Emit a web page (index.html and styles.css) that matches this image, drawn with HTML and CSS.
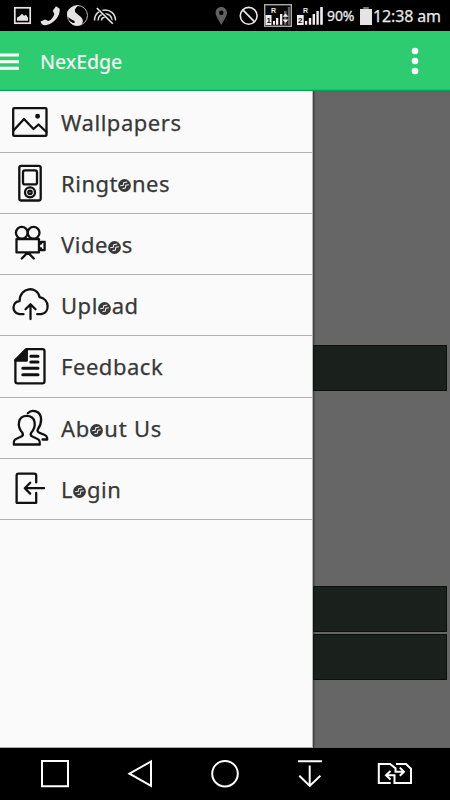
FILE: index.html
```html
<!DOCTYPE html>
<html lang="en">
<head>
<meta charset="utf-8">
<title>NexEdge</title>
<link rel="stylesheet" href="styles.css">
</head>
<body>
<svg class="defs" width="0" height="0"><defs><symbol id="disc" viewBox="0 0 12 12"><circle cx="6" cy="6" r="5.9" fill="#383838"/><path d="M2 6.2L4.8 5.8 5.3 3.5 8.5 2.8M4.2 8.9L6.8 8.3 7.2 5.8 10 5.3" fill="none" stroke="#eee" stroke-width="1"/></symbol></defs></svg>
<div class="phone">
  <div class="status">
    <svg class="status-left" width="130" height="31" viewBox="0 0 130 31">
      <rect x="14.8" y="7.8" width="15.4" height="15.4" fill="none" stroke="#e4e4e4" stroke-width="1.7"/>
      <path d="M17 20.7v-3l3-2 2-2 2 2 2-1 2 3v3z" fill="#e4e4e4"/>
      <path d="M56 6.2l3.7 2.6c.8 7-5.8 15.4-14.4 16.4-2.2.2-4-.8-4.8-3.6l4.6-2 3.2 1.5c3.2-1.5 5.2-4 6-7.2l-1.6-3.2z" fill="#e4e4e4"/>
      <circle cx="77.5" cy="15.5" r="10" fill="none" stroke="#bbb" stroke-width="1"/>
      <path d="M79 5.3c-7 .2-12 4.2-12 8.8 0 4 4.8 5 7.3 7 1.4 1.1.3 2.4-1.8 1.6l-3.7-2.3c2 4 5.7 5.7 9.1 5.3 5-.6 6.2-4.6 3.7-8-2.2-2.9-7-4.1-6.7-7.4.2-2 2-3.8 4.1-5z" fill="#e4e4e4"/>
      <g fill="none" stroke="#ddd" stroke-width="1.5"><path d="M94.5 20.5c0-14 21-14 21 0M98 20.5c0-9 14-9 14 0M101.5 20.5c0-4.5 7-4.5 7 0"/></g>
      <path d="M97 7.5l16 16" stroke="#000" stroke-width="3.2"/><path d="M96.8 8l16 15.8" stroke="#eee" stroke-width="1.6"/>
    </svg>
    <svg class="status-signals" width="114" height="31" viewBox="210 0 114 31">
      <path fill-rule="evenodd" d="M221.3 7c-3.4 0-5.7 2.5-5.7 5.6 0 3.8 3.5 8 5.7 12.4 2.2-4.4 5.7-8.6 5.7-12.4 0-3.1-2.3-5.6-5.7-5.6zm0 3.5a2.2 2.2 0 110 4.4 2.2 2.2 0 010-4.4z" fill="#606060"/>
      <circle cx="248.7" cy="15.8" r="8.4" fill="none" stroke="#e8e8e8" stroke-width="1.6"/><path d="M242.8 9.8l11.8 12" stroke="#e8e8e8" stroke-width="1.7"/>
      <rect x="264.7" y="4.7" width="26.6" height="21.6" fill="#080808" stroke="#aaa" stroke-width="1.4"/>
      <g fill="#eee"><path d="M265.5 15h6v10h-6zM273 21h2v3.7h-2zM276 18h2.3v6.7H276zM280 14h2.3v10.7H280z"/><path d="M284 11h2.6v13.7H284zM287.8 7h2.5v17.7h-2.5z" fill="#606060"/><path d="M285.5 13.5l3 3.2h-6zM282.5 19.5h6l-3 3.2z"/><path d="M297 15h6.7v10H297zM305 21h2.2v3.7H305zM308.8 18h2.4v6.7h-2.4zM312.6 14h2.4v10.7h-2.4zM316.4 11h2.4v13.7h-2.4zM320.2 7h2.6v17.7h-2.6z"/></g>
      <g font-family="Liberation Sans, sans-serif" font-weight="700" font-size="8"><text x="271" y="12.8" fill="#eee" font-size="7">R</text><text x="303" y="12.8" fill="#eee" font-size="7">R</text><text x="266.5" y="23" fill="#111">1</text><text x="298" y="23" fill="#111">2</text></g>
    </svg>
    <span class="percent">90%</span>
    <svg class="battery" width="12" height="18" viewBox="0 0 12 18"><path d="M3.2 0h5.6v2H3.2z" fill="#777"/><path d="M0 2h12v16H0z" fill="#e4e4e4"/></svg>
    <span class="clock">12:38 am</span>
  </div>

  <header class="toolbar">
    <svg class="menu" width="19" height="18" viewBox="0 0 19 18"><path d="M0 2h19M0 8.7h19M0 15.3h19" stroke="#fff" stroke-width="2.9"/></svg>
    <h1>NexEdge</h1>
    <svg class="more" width="8" height="28" viewBox="0 0 8 28"><g fill="#fff"><circle cx="4" cy="4" r="3.3"/><circle cx="4" cy="14" r="3.3"/><circle cx="4" cy="24" r="3.3"/></g></svg>
  </header>

  <main>
    <nav class="drawer">
      <a class="item"><svg class="icon" width="40" height="40" viewBox="0 0 40 40"><rect x="3.2" y="6.2" width="33.3" height="27.7" rx="1"/><path d="M3.5 28.5L14 17l9.5 10 5-4.5 8 7.5"/><circle cx="27.6" cy="14.2" r="1.3" class="solid"/></svg><span class="label wallpapers">Wallpapers</span></a>
      <a class="item"><svg class="icon" width="40" height="40" viewBox="0 0 40 40"><rect x="9.3" y="2.8" width="21.4" height="34.7" rx="2"/><rect x="13" y="7.4" width="14" height="14" rx="2"/><circle cx="20" cy="29.3" r="5"/><circle cx="20" cy="29.3" r="1.7"/></svg><span class="label ringtones">Ringt<span class="o">o<svg><use href="#disc"/></svg></span>nes</span></a>
      <a class="item"><svg class="icon" width="40" height="40" viewBox="0 0 40 40"><circle cx="11.8" cy="8.8" r="5.9"/><circle cx="23.6" cy="8.8" r="5.9"/><path d="M6.5 15.1h22.5v13.3H6.5zM29.3 19.5h1.8v-1.7h3.5v8.4h-3.5v-1.7h-1.8M17.8 28.4L11.8 34.5M17.8 28.4l6 6.1"/></svg><span class="label videos">Vide<span class="o">o<svg><use href="#disc"/></svg></span>s</span></a>
      <a class="item"><svg class="icon" width="40" height="40" viewBox="0 0 40 40"><path d="M13.5 29.2h-4C.8 27.7 2.2 16.6 9.6 16c0-14.4 18-15.4 20-3.8C40 14.2 40 27.8 31.2 29.2h-4M20.5 34V19.3M15.5 24.3l5-5 5 5"/></svg><span class="label upload">Upl<span class="o">o<svg><use href="#disc"/></svg></span>ad</span></a>
      <a class="item"><svg class="icon" width="40" height="40" viewBox="0 0 40 40"><path d="M16 3.2h16.4q2.1 0 2.1 2.1v30q0 2.1-2.1 2.1H7.5q-2.1 0-2.1-2.1V14z"/><path d="M16.8 3.3v11.2H5.4z" class="solid"/><path d="M20.8 10.2H28M20.8 16H28M12.8 22.2H28M12.8 28.7H28" stroke-width="3"/></svg><span class="label feedback">Feedback</span></a>
      <a class="item"><svg class="icon" width="40" height="40" viewBox="0 0 40 40"><path d="M3.8 36.5C2.6 30 9 30.5 11.8 28.2q1.8-1.3.6-3.4C6.5 18 8 7.8 16.8 7.8S27 18 21.2 24.8q-1.2 2.1.6 3.4C24.6 30.5 31 30 29.8 36.5z"/><path d="M17.8 5.2c4-4.2 13.2-2.5 13.3 6.1.1 5.5-1.4 7.5-3.2 9.9q-1 1.8.8 3.2C31.5 26.5 38 25.8 37.2 31.5h-4.7"/></svg><span class="label about">Ab<span class="o">o<svg><use href="#disc"/></svg></span>ut Us</span></a>
      <a class="item"><svg class="icon" width="40" height="40" viewBox="0 0 40 40"><path d="M26.2 13.4V6.6q0-2-2-2H8.6q-2 0-2 2v27.2h19.6v-9.9M15 19.2h19M20.2 13.8L14.8 19.2l5.4 5.4"/></svg><span class="label login">L<span class="o">o<svg><use href="#disc"/></svg></span>gin</span></a>
    </nav>
    <div class="backdrop">
      <div class="card"></div>
      <div class="card second"></div>
      <div class="card third"></div>
    </div>
  </main>

  <footer class="navbar">
    <svg width="450" height="52" viewBox="0 748 450 52" fill="none" stroke="#fff" stroke-width="2">
      <path d="M42 761h26v25.3H42zM129.5 773.7l21.5-12.2v24.4z"/>
      <circle cx="225" cy="773.7" r="12.8"/>
      <path d="M298 761.3h24M309.7 765.5v20M299.3 775.7l10.4 10.2 10.7-10.2"/>
      <path d="M390.7 783h-11.9v-19h11.2l5.5 4.3v3.4h8M396 764h10l5 4.8V783h-16.5v-7.8h-8M399.8 767.6l4.2 4.1-4.2 4.1M390.5 771l-4.5 4.2 4.5 4.2"/>
    </svg>
  </footer>
</div>
</body>
</html>
```

FILE: styles.css
```css
* { box-sizing: border-box; }
body { margin: 0; background: #000; font-family: "Noto Sans", sans-serif; }
.defs { display: block; }
.phone { width: 450px; height: 800px; display: flex; flex-direction: column; overflow: hidden; }
svg { display: block; flex: none; }
.status { height: 31px; flex: none; display: flex; align-items: center; background: #000; color: #e8e8e8; }
.status-signals { margin-left: 80px; }
.percent { width: 28px; margin-left: 3px; font-size: 14px; -webkit-text-stroke: .3px #e8e8e8; letter-spacing: -.1px; white-space: nowrap; }
.battery { margin-left: 5px; }
.clock { margin-left: 1px; font-size: 16px; -webkit-text-stroke: .25px #e8e8e8; letter-spacing: -.15px; white-space: nowrap; }
.toolbar { height: 60px; flex: none; display: flex; align-items: center; background: #2ecc71; border-bottom: 1px solid #08a84c; box-shadow: inset 0 -1px #27bc65; }
.toolbar h1 { margin: 3px 0 0 21px; font-size: 19.5px; font-weight: 500; color: #f2f2f2; line-height: 28px; letter-spacing: -.1px; }
.menu { margin-top: 2px; }
.more { margin: 1px 31px 0 auto; }
main { height: 657px; flex: none; display: flex; background: #666; }
.drawer { width: 313px; flex: none; padding-top: .6px; background: #fafafa; border-right: 1px solid #b8b8b8; border-bottom: 1px solid #aaa; }
.item { height: 61.2px; display: flex; align-items: center; padding-left: 10px; border-bottom: 1px solid #b2b2b2; }
.icon { fill: none; stroke: #111; stroke-width: 2.3; stroke-linecap: round; stroke-linejoin: round; }
.solid { fill: #111; }
.label { margin-left: 11px; font-size: 22px; line-height: 30px; color: #383838; -webkit-text-stroke: .25px #383838; letter-spacing: .53px; white-space: nowrap; }
.label.about { letter-spacing: .8px; }
.o { position: relative; color: transparent; -webkit-text-stroke: 0; }
.o svg { position: absolute; left: 0; bottom: 5.5px; width: 13px; height: 13px; }
.backdrop { flex: 1; padding: 254px 3px 0 0; box-shadow: inset 2px 0 2px -1px #333; }
.card { height: 46px; background: #1a201c; border: 1px solid #0b120d; }
.second { margin-top: 195px; }
.third { margin-top: 2px; }
.navbar { height: 52px; flex: none; background: #000; }
```
